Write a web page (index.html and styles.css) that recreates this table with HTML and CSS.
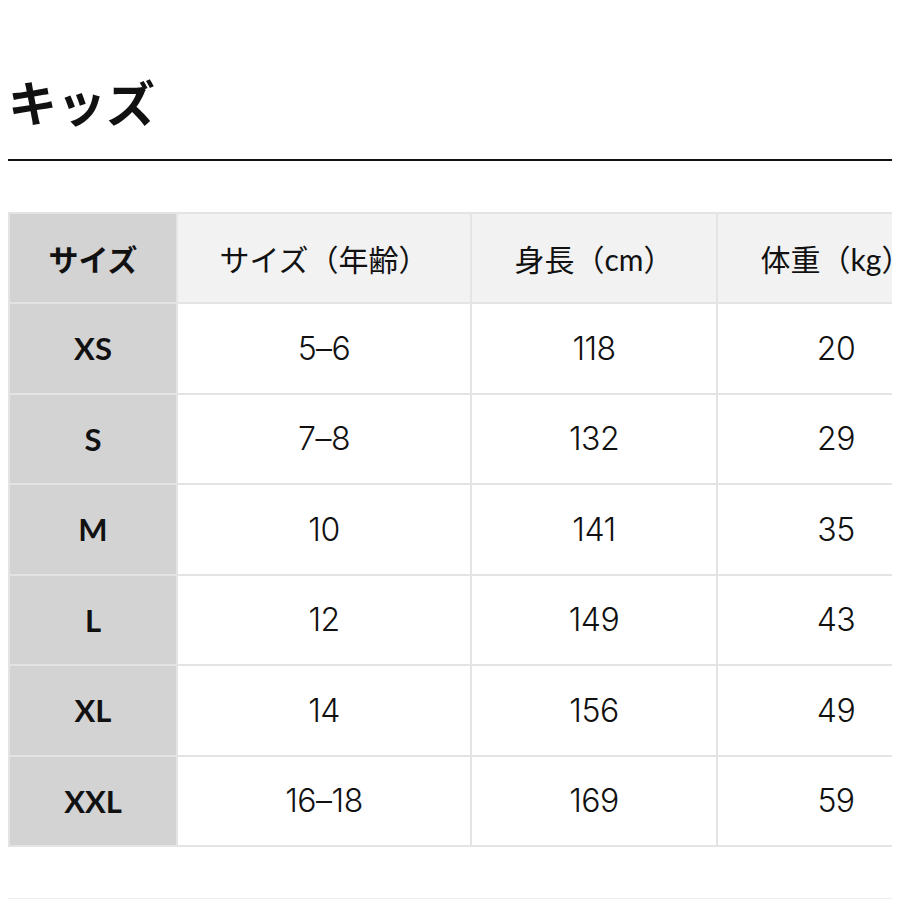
FILE: index.html
```html
<!DOCTYPE html>
<html lang="ja">
<head>
<meta charset="utf-8">
<link rel="stylesheet" href="styles.css">
</head>
<body>
<h1 class="title">キッズ</h1>
<hr class="rule">
<div class="wrap">
<table class="size-table">
<colgroup>
<col class="c1"><col class="c2"><col class="c3"><col class="c4">
</colgroup>
<thead>
<tr><th class="key">サイズ</th><th>サイズ（年齢）</th><th>身長（cm）</th><th>体重（kg）</th></tr>
</thead>
<tbody>
<tr><th class="key">XS</th><td>5–6</td><td>118</td><td>20</td></tr>
<tr><th class="key">S</th><td>7–8</td><td>132</td><td>29</td></tr>
<tr><th class="key">M</th><td>10</td><td>141</td><td>35</td></tr>
<tr><th class="key">L</th><td>12</td><td>149</td><td>43</td></tr>
<tr><th class="key">XL</th><td>14</td><td>156</td><td>49</td></tr>
<tr><th class="key">XXL</th><td>16–18</td><td>169</td><td>59</td></tr>
</tbody>
</table>
</div>
<hr class="foot">
</body>
</html>
```
FILE: styles.css
```css
html, body { background: #fff; }
body {
  margin: 0;
  padding: 0 8px;
  font-family: "Noto Sans CJK JP", "Noto Sans", sans-serif;
  color: #111;
}
.title {
  margin: 0;
  padding-top: 68px;
  font-size: 49px;
  line-height: 66px;
  font-weight: 700;
}
.rule {
  margin: 25px 0 0 0;
  border: 0;
  border-top: 2px solid #111;
  height: 0;
}
.wrap {
  margin-top: 51px;
  width: 884px;
  overflow: hidden;
}
.size-table {
  border-collapse: collapse;
  table-layout: fixed;
  width: 946px;
}
.c1 { width: 168px; }
.c2 { width: 294px; }
.c3 { width: 246px; }
.c4 { width: 238px; }
.size-table th, .size-table td {
  border: 2px solid #e4e4e4;
  height: 88.5px;
  padding: 0;
  text-align: center;
  vertical-align: middle;
  font-family: "Inter", "Noto Sans CJK JP", sans-serif;
  font-size: 32px;
  font-weight: 300;
  letter-spacing: -0.5px;
}
.size-table thead th {
  background: #f2f2f2;
  font-family: "Lato", "Noto Sans CJK JP", sans-serif;
  font-weight: 400;
  letter-spacing: 0;
  font-size: 30px;
  height: 88px;
}
.size-table .key {
  background: #d3d3d3;
  font-family: "Lato", "Noto Sans CJK JP", sans-serif;
  font-weight: 700;
  letter-spacing: 0;
  font-size: 31px;
}
.size-table thead .key { font-size: 30px; }
.foot {
  margin: 51px 0 0 0;
  border: 0;
  border-top: 1px solid #eee;
  height: 0;
}
```
